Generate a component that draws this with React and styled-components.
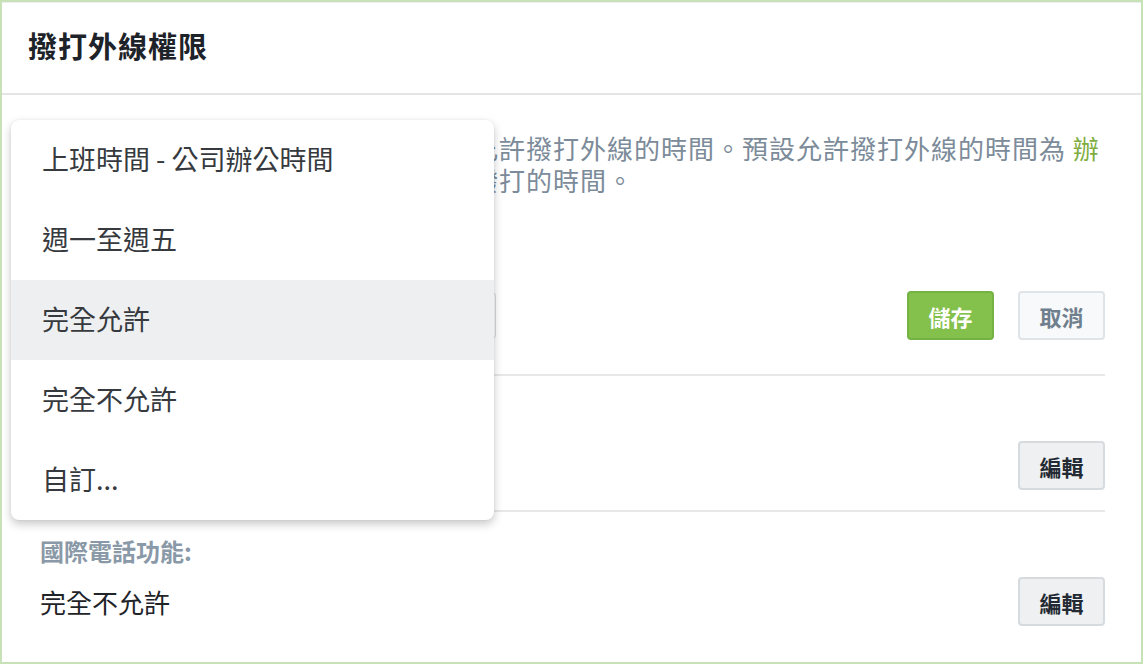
import React from "react";
import styled, { createGlobalStyle } from "styled-components";

const GlobalStyle = createGlobalStyle`
  html, body {
    margin: 0;
    padding: 0;
    background: #ffffff;
  }
  body {
    font-family: "Noto Sans CJK TC", "Noto Sans", sans-serif;
  }
`;

const Frame = styled.div`
  position: relative;
  box-sizing: border-box;
  width: 1143px;
  height: 664px;
  border: 2px solid #c7e2b6;
  background: #ffffff;
  overflow: hidden;
`;

const Panel = styled.div`
  border-top: 1px solid #eceef1;
  height: 100%;
  display: flex;
  flex-direction: column;
`;

const Header = styled.div`
  box-sizing: border-box;
  height: 92px;
  display: flex;
  align-items: center;
  padding: 0 0 6px 26px;
  border-bottom: 2px solid #e4e5e7;
  h2 {
    margin: 0;
    font-size: 29px;
    line-height: 1;
    font-weight: 700;
    color: #1e2329;
    letter-spacing: 1px;
  }
`;

const Body = styled.div`
  padding: 0 36px 0 38px;
  flex: 1;
`;

const Description = styled.p`
  margin: 0;
  padding-top: 37px;
  font-size: 26px;
  letter-spacing: 1px;
  line-height: 32px;
  color: #7c8b99;
  a {
    color: #7fae3f;
    text-decoration: none;
  }
`;

const Section = styled.div`
  padding: ${(props) => props.padding || "25px 0 21px"};
  border-bottom: ${(props) => (props.last ? "none" : "2px solid #e6e8ea")};
`;

const Label = styled.div`
  font-size: 24px;
  font-weight: 700;
  line-height: 28px;
  color: #8a99a7;
`;

const ValueRow = styled.div`
  display: flex;
  align-items: center;
  justify-content: space-between;
  margin-top: ${(props) => props.gap || "12px"};
`;

const Value = styled.div`
  font-size: 26px;
  line-height: 36px;
  color: #1f2429;
`;

const Select = styled.div`
  width: 440px;
  height: 45px;
  border: 1px solid #d5dae0;
  border-radius: 4px;
  font-size: 22px;
  line-height: 45px;
  padding-left: 14px;
  color: #333;
`;

const Buttons = styled.div`
  display: flex;
  gap: 24px;
`;

const Button = styled.button`
  box-sizing: border-box;
  width: 87px;
  height: 49px;
  border-radius: 4px;
  font-family: inherit;
  font-size: 22px;
  font-weight: 700;
  cursor: pointer;
  border: 2px solid
    ${(props) =>
      props.variant === "primary"
        ? "#74b343"
        : props.variant === "ghost"
        ? "#dfe4e9"
        : "#d6dbe0"};
  background: ${(props) =>
    props.variant === "primary"
      ? "#84c04c"
      : props.variant === "ghost"
      ? "#f8f9fa"
      : "#eef0f2"};
  color: ${(props) =>
    props.variant === "primary"
      ? "#ffffff"
      : props.variant === "ghost"
      ? "#6f7f8e"
      : "#232a33"};
`;

const Menu = styled.ul`
  position: absolute;
  left: 9px;
  top: 118px;
  width: 483px;
  margin: 0;
  padding: 0;
  list-style: none;
  background: #ffffff;
  border-radius: 8px;
  box-shadow: 0 4px 10px rgba(0, 0, 0, 0.22), 0 0 2px rgba(0, 0, 0, 0.08);
  overflow: hidden;
`;

const MenuItem = styled.li`
  height: 80px;
  display: flex;
  align-items: center;
  padding: 0 0 3px 31px;
  box-sizing: border-box;
  font-size: 27px;
  color: #363a3e;
  background: ${(props) => (props.active ? "#eeeff1" : "transparent")};
`;

const options = [
  "上班時間 - 公司辦公時間",
  "週一至週五",
  "完全允許",
  "完全不允許",
  "自訂...",
];

export default function App() {
  return (
    <Frame>
      <GlobalStyle />
      <Panel>
        <Header>
          <h2>撥打外線權限</h2>
        </Header>
        <Body>
          <Section padding="0 0 34px">
            <Description>
              您可以在這裡設定此分機所屬使用者允許撥打外線的時間。預設允許撥打外線的時間為{" "}
              <a href="#">辦公時間</a>，若需要變更請選擇其他允許撥打的時間。
            </Description>
            <Label style={{ marginTop: 38 }}>允許撥打外線的時間:</Label>
            <ValueRow gap="29px">
              <Select>完全允許</Select>
              <Buttons>
                <Button variant="primary">儲存</Button>
                <Button variant="ghost">取消</Button>
              </Buttons>
            </ValueRow>
          </Section>
          <Section padding="23px 0 20px">
            <Label>國內長途功能:</Label>
            <ValueRow gap="14px">
              <Value>完全允許</Value>
              <Button>編輯</Button>
            </ValueRow>
          </Section>
          <Section last>
            <Label>國際電話功能:</Label>
            <ValueRow>
              <Value>完全不允許</Value>
              <Button>編輯</Button>
            </ValueRow>
          </Section>
        </Body>
      </Panel>
      <Menu>
        {options.map((option) => (
          <MenuItem key={option} active={option === "完全允許"}>
            {option}
          </MenuItem>
        ))}
      </Menu>
    </Frame>
  );
}
